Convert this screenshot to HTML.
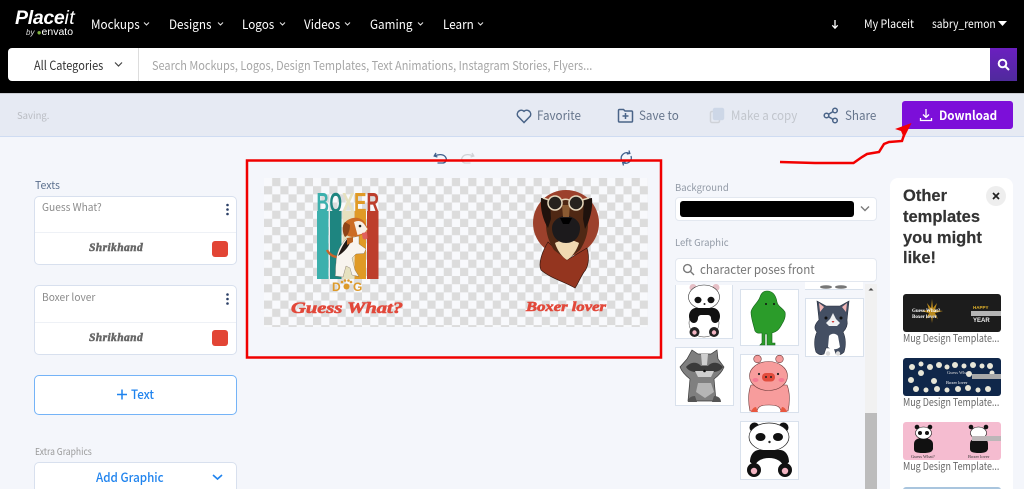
<!DOCTYPE html>
<html style="height:489px;overflow:hidden"><head><meta charset="utf-8">
<style>
html,body{margin:0;padding:0}
body{width:1024px;height:489px;overflow:hidden;position:relative;background:#f4f6fb;font-family:"Noto Sans CJK JP","Liberation Sans",sans-serif}
#w{position:absolute;left:0;top:0;width:1024px;height:489px;overflow:hidden}
.t{position:absolute;white-space:nowrap;line-height:16px;height:16px;transform-origin:0 50%}
.b{position:absolute;box-sizing:border-box}
.n{color:#fff;font-size:13px;transform:scaleX(.9)}
.a{font-size:12.5px;transform:scaleX(.93)}
.card{background:#fff;border:1px solid #d8e0ee;border-radius:5px}
.sh{font-family:"Liberation Serif",serif;font-weight:bold;font-style:italic;color:#666;font-size:11.5px;-webkit-text-stroke:.5px #666;letter-spacing:.4px}
.sw{position:absolute;width:16px;height:16px;background:#e24535;border-radius:3px}
.th{position:absolute;background:#fff;border:1px solid #d9e1ec;box-sizing:border-box}
.cap{color:#666;font-size:10.5px;transform:scaleX(.85)}
.h{position:absolute;white-space:nowrap;left:903px;height:21px;line-height:21px;font-family:'Liberation Sans',sans-serif;font-weight:bold;font-size:16.5px;color:#333;-webkit-text-stroke:.2px #333}
svg{position:absolute;overflow:visible}
</style></head><body><div id="w">
<div class="b" style="left:0;top:0;width:1024px;height:93px;background:#000"></div>
<div class="t" style="left:15px;top:6px;height:24px;line-height:24px;font-family:'Liberation Sans',sans-serif;font-style:italic;font-weight:bold;font-size:19.5px;color:#fff;letter-spacing:-.3px">Place<span style="font-weight:normal;letter-spacing:.5px">it</span></div>
<div class="t" style="left:26px;top:24px;font-family:'Liberation Sans',sans-serif;font-size:8px;color:#ddd"><i>by</i> <span style="color:#82b541">●</span><span style="color:#fff;font-size:10.5px">envato</span></div>

<div class="t n" style="left:91px;top:16px">Mockups</div>
<div class="t n" style="left:169px;top:16px">Designs</div>
<div class="t n" style="left:242px;top:16px">Logos</div>
<div class="t n" style="left:304px;top:16px">Videos</div>
<div class="t n" style="left:370px;top:16px">Gaming</div>
<div class="t n" style="left:443px;top:16px">Learn</div>
<svg style="left:0;top:0" width="1024" height="93" fill="none" stroke="#ddd" stroke-width="1.1">
<path d="M144 22.5l2.5 2.500 2.500-2.500M218 22.500l2.500 2.500 2.500-2.500M280 22.500l2.500 2.500 2.500-2.500M345 22.500l2.500 2.500 2.500-2.500M418 22.500l2.500 2.500 2.500-2.500M478 22.500l2.500 2.500 2.500-2.500"/>
<path d="M835 20v8M832.3 25.3l2.7 2.9 2.7-2.9" stroke="#fff" stroke-width="1.3"/>
<path d="M998 21h9l-4.500 5z" fill="#fff" stroke="none"/>
</svg>
<div class="t n" style="left:864px;top:16px;font-size:11.5px;transform:scaleX(.92)">My Placeit</div>
<div class="t n" style="left:932px;top:16px;font-size:11.5px;transform:scaleX(.89)">sabry_remon</div>

<div class="b" style="left:8px;top:48px;width:1009px;height:33px;background:#fff;border-radius:4px 0 0 4px"></div>
<div class="b" style="left:138px;top:48px;width:1px;height:33px;background:#ddd"></div>
<div class="t" style="left:34px;top:56.5px;font-size:12.5px;color:#333;transform:scaleX(.875)">All Categories</div>
<svg style="left:0;top:0" width="140" height="80" fill="none" stroke="#444" stroke-width="1.2"><path d="M115 62.5l3.500 3.500 3.500-3.500"/></svg>
<div class="t" style="left:152px;top:56.5px;font-size:12.3px;color:#a6a6a6;transform:scaleX(.89)">Search Mockups, Logos, Design Templates, Text Animations, Instagram Stories, Flyers...</div>
<div class="b" style="left:990px;top:48px;width:27px;height:33px;background:linear-gradient(#6b1fc0,#4f2a9c)"></div>
<svg style="left:990px;top:48px" width="27" height="33" fill="none" stroke="#fff" stroke-width="2"><circle cx="12.5" cy="15.5" r="3.8"/><path d="M15.5 18.5l3.500 3.500"/></svg>

<div class="b" style="left:0;top:93px;width:1024px;height:44px;background:#e6eaf3;border-top:1px solid #c9ccd2;border-bottom:1px solid #cfdcf2"></div>
<div class="t" style="left:17px;top:107px;font-size:9.5px;color:#b9bcc2">Saving.</div>
<div class="t a" style="left:537px;top:107px;color:#66758c">Favorite</div>
<div class="t a" style="left:639px;top:107px;color:#66758c">Save to</div>
<div class="t a" style="left:731px;top:107px;color:#c2c6cd">Make a copy</div>
<div class="t a" style="left:845px;top:107px;color:#66758c">Share</div>
<svg style="left:0;top:0" width="1024" height="180" fill="none" stroke="#4a6488" stroke-width="1.5">
<path d="M524 122.5l-6.200-6.300a4 4 0 0 1 6.200-4.900a4 4 0 0 1 6.200 4.900z"/>
<path d="M618.500 110.500a1 1 0 0 1 1-1h4l1.500 1.500h6.500a1 1 0 0 1 1 1v9a1 1 0 0 1-1 1h-12a1 1 0 0 1-1-1zM625.500 113v6M622.500 116h6"/>
<rect x="710.500" y="111.500" width="9" height="11" rx="1.5" stroke="#cfd2d8"/>
<rect x="713.500" y="108.500" width="10" height="11" rx="1.5" fill="#cdd7e7" stroke="#cdd7e7"/>
<circle cx="826.500" cy="115.500" r="2.3"/><circle cx="835" cy="110.500" r="2.3"/><circle cx="835" cy="120.500" r="2.3"/><path d="M828.500 114.300l4.500-2.700M828.500 116.700l4.500 2.700"/>
</svg>
<div class="b" style="left:902px;top:101px;width:111px;height:28px;background:#7c0fd9;border-radius:3px"></div>
<div class="t a" style="left:939px;top:107px;font-weight:bold;color:#fff">Download</div>
<svg style="left:0;top:0" width="1024" height="180" fill="none" stroke="#fff" stroke-width="1.3"><path d="M926 109v8M923 114.500l3 3 3-3M920.500 118v2.500h11V118"/></svg>

<svg style="left:0;top:0" width="1024" height="180" fill="none" stroke="#3f5f8c" stroke-width="1.3">
<path d="M436 153l-1.800 3 3.200 1M434.500 156c4-2 9-2 11 1s0 6-3 6h-5"/>
<path d="M472 153l1.800 3-3.200 1M473.500 156c-4-2-9-2-11 1s0 6 3 6h5" stroke="#d0d2d6"/>
<path d="M621.500 160a5.500 5.500 0 0 1 8-6.500M631 156a5.500 5.500 0 0 1-8 6.500M629 150.500l.8 3-3 .5M623.500 165.500l-.8-3 3-.5"/>
</svg>

<!-- red annotation arrow -->
<svg style="left:0;top:0" width="1024" height="180"><path d="M780 162L815 163L853.500 163L862 157L867 154L879 152L884 144L889 142L902 141L905 132" fill="none" stroke="#f20000" stroke-width="2.5"/><path d="M911.500 123L895 129L901 131L904 138z" fill="#f20000"/></svg>

<!-- left panel -->
<div class="t" style="left:35px;top:178px;font-size:10.5px;color:#5b6f8d">Texts</div>
<div class="b card" style="left:34px;top:196px;width:203px;height:69px"></div>
<div class="b" style="left:35px;top:232px;width:201px;height:1px;background:#eef1f6"></div>
<div class="t" style="left:42px;top:200px;font-size:10.5px;color:#8b8b8b;transform:scaleX(.97)">Guess What?</div>
<div class="t sh" style="left:89px;top:240px">Shrikhand</div>
<div class="sw" style="left:212px;top:241px"></div>
<div class="b card" style="left:34px;top:285px;width:203px;height:70px"></div>
<div class="b" style="left:35px;top:322px;width:201px;height:1px;background:#eef1f6"></div>
<div class="t" style="left:42px;top:290px;font-size:10.5px;color:#8b8b8b;transform:scaleX(.97)">Boxer lover</div>
<div class="t sh" style="left:89px;top:330px">Shrikhand</div>
<div class="sw" style="left:212px;top:330px"></div>
<svg style="left:0;top:0" width="240" height="360" fill="#2b3f66"><circle cx="227.5" cy="205" r="1.3"/><circle cx="227.5" cy="209.5" r="1.3"/><circle cx="227.5" cy="214" r="1.3"/><circle cx="227.5" cy="294.5" r="1.3"/><circle cx="227.5" cy="299" r="1.3"/><circle cx="227.5" cy="303.5" r="1.3"/></svg>
<div class="b" style="left:34px;top:375px;width:203px;height:40px;background:#fff;border:1px solid #74b3f7;border-radius:5px"></div>
<div class="t a" style="left:131px;top:386px;font-weight:500;color:#1f83ee">Text</div>
<svg style="left:0;top:0" width="240" height="420" fill="none" stroke="#1f83ee" stroke-width="1.5"><path d="M122 389.500v10M117 394.500h10"/></svg>
<div class="t" style="left:35px;top:443px;font-size:9.5px;color:#999;transform:scaleX(.9)">Extra Graphics</div>
<div class="b card" style="left:34px;top:462px;width:203px;height:40px"></div>
<div class="t a" style="left:96px;top:469px;font-weight:500;color:#1f83ee">Add Graphic</div>
<svg style="left:0;top:0" width="240" height="489" fill="none" stroke="#1f83ee" stroke-width="1.6"><path d="M213 475l4.500 4 4.500-4"/></svg>

<!-- canvas -->
<svg style="left:0;top:0" width="1024" height="489">
<defs><pattern id="c" x="264" y="178" width="16.34" height="16.34" patternUnits="userSpaceOnUse"><rect x="8.17" width="8.17" height="8.17" fill="#dcdcdc"/><rect y="8.17" width="8.17" height="8.17" fill="#dcdcdc"/></pattern></defs>
<rect x="264" y="178" width="384" height="149" fill="#f8f9fc"/>
<rect x="264" y="178" width="384" height="149" fill="url(#c)"/>
<rect x="247" y="160.5" width="414" height="197" fill="none" stroke="#f00000" stroke-width="2.5"/>
<!-- boxer stripes -->
<rect x="317" y="211" width="11.5" height="68" fill="#3cb0ad"/>
<rect x="330" y="211" width="11.5" height="68" fill="#1e8580"/>
<rect x="342.5" y="211" width="11.5" height="68" fill="#e6e1bf"/>
<rect x="354.5" y="211" width="11.5" height="68" fill="#e09a26"/>
<rect x="367" y="211" width="11.5" height="68" fill="#bd3e2c"/>
<g font-family="'Liberation Sans',sans-serif" font-weight="bold" font-size="28">
<text x="316.5" y="212" fill="#3cb0ad" textLength="12.5" lengthAdjust="spacingAndGlyphs">B</text>
<text x="329.5" y="212" fill="#1e8580" textLength="12.5" lengthAdjust="spacingAndGlyphs">O</text>
<text x="342" y="212" fill="#e6e1bf" textLength="12.5" lengthAdjust="spacingAndGlyphs">X</text>
<text x="354" y="212" fill="#e09a26" textLength="12.5" lengthAdjust="spacingAndGlyphs">E</text>
<text x="366.500" y="212" fill="#bd3e2c" textLength="12.5" lengthAdjust="spacingAndGlyphs">R</text>
</g>
<!-- beagle -->
<path d="M327 250c2 4 6 7 11 7" fill="none" stroke="#c8642a" stroke-width="2.4"/>
<path d="M346 239C340 245 336 254 336 263C335 268 336 274 335 276L343 277L346 266L350 268L352 275L359 276.500L355 270L352 258L356 254L364 253.500L366 249L359 244L359 236Z" fill="#f8f4ee" stroke="#5a4a3a" stroke-width=".3"/>
<path d="M338 256C341 248 344 243 348 238L351 241C348 248 344 252 338 256Z" fill="#221a16"/>
<path d="M347 238l6-1 0 5-6 3z" fill="#b8601f"/>
<path d="M343 226c2-6 9-9 15-8 5 1 7 4 8 7l2 4-2 4-7 3-7 1c-6-1-10-4-9-11z" fill="#cc6c24"/>
<path d="M354 222c4-2 8-1 10 2l3.500 5-3 4-7 2z" fill="#f7efe6"/>
<path d="M345 222c-3 3-3 11 0 15 3-1 5-7 5-12z" fill="#8e4517"/>
<circle cx="360" cy="226" r="1.300" fill="#222"/>
<path d="M362 233l5-1 .5 6c-1 2-4 2-5 0z" fill="#e0605c"/>
<text x="332" y="291" font-family="'Liberation Sans',sans-serif" font-weight="bold" font-size="12" fill="#dd9a2a">D</text>
<circle cx="346.5" cy="286.500" r="3" fill="#dd9a2a"/><circle cx="342" cy="282" r="1.3" fill="#dd9a2a"/><circle cx="345" cy="280.500" r="1.3" fill="#dd9a2a"/><circle cx="348.5" cy="280.5" r="1.3" fill="#dd9a2a"/><circle cx="351" cy="282" r="1.3" fill="#dd9a2a"/>
<text x="353" y="291" font-family="'Liberation Sans',sans-serif" font-weight="bold" font-size="12" fill="#dd9a2a">G</text>
<!-- boxer dog -->
<circle cx="566" cy="223" r="33" fill="#9c412c"/>
<path d="M548 242L567 260L587 248C590 258 588 268 584 272C580 278 578 284 575 288C565 282 550 278 541 270C538 264 542 252 548 242Z" fill="#94351f" stroke="#35160e" stroke-width=".7"/>
<path d="M544 200h45c2 8 1 16-1 24c0 10-3 18-8 26l-13 10-13-10c-5-8-8-16-8-26c-2-8-2-16-2-24z" fill="#4f2814"/>
<path d="M541 198l9 1 1 20-3 9c-5-8-8-19-7-30zM592 198l-8 1-1 20 2 10c5-9 8-20 7-31z" fill="#1f120d"/>
<path d="M555 243c2 7 7 14 12 17 5-3 10-10 12-17-4-2-7-3-12-3s-8 1-12 3z" fill="#f0d9b2"/>
<path d="M552 228c0-7 7-12 14-12s14 5 14 12c0 9-6 15-14 15s-14-6-14-15z" fill="#1c1a1c"/>
<path d="M560 218h12l-3 6h-6z" fill="#000"/>
<path d="M562 205h8l-1 12h-6z" fill="#8a5a32"/>
<circle cx="555" cy="203" r="7" fill="#26221e" stroke="#e6d8bd" stroke-width="1.5"/>
<circle cx="576" cy="203" r="7" fill="#26221e" stroke="#e6d8bd" stroke-width="1.5"/>
<path d="M543 198l6 2M582 200l7-2M562 200c3-1 5-1 7 0" stroke="#e6d8bd" stroke-width="1.5" fill="none"/>
<!-- captions -->
<g font-family="'Liberation Serif',serif" font-weight="bold" font-style="italic" fill="#e2483a" stroke="#e2483a" stroke-width=".6">
<text x="291" y="313" font-size="16" textLength="112" lengthAdjust="spacingAndGlyphs">Guess What?</text>
<text x="526" y="311" font-size="13.5" textLength="80" lengthAdjust="spacingAndGlyphs">Boxer lover</text>
</g>
</svg>

<!-- right controls -->
<div class="t" style="left:675px;top:179px;font-size:9.5px;color:#929aa6">Background</div>
<div class="b card" style="left:675px;top:197px;width:202px;height:24px;border-radius:4px;border-color:#e3e8f0"></div>
<div class="b" style="left:680px;top:201px;width:174px;height:16px;background:#000;border-radius:3px"></div>
<div class="t" style="left:675px;top:234px;font-size:9.5px;color:#929aa6">Left Graphic</div>
<div class="b card" style="left:675px;top:258px;width:202px;height:24px;border-radius:4px;border-color:#e3e8f0"></div>
<div class="t a" style="left:700px;top:261px;color:#777">character poses front</div>
<svg style="left:0;top:0" width="1024" height="300" fill="none" stroke="#7a7a7a" stroke-width="1.4"><path d="M861 206.500l4 4 4-4"/><circle cx="687.5" cy="268.500" r="3.9"/><path d="M690.500 271.500l3.500 3.500"/></svg>

<!-- thumbnails -->
<div class="b" style="left:805px;top:282px;width:58px;height:8px;background:#fff;border-bottom:1px solid #d9e1ec"></div>
<div class="th" style="left:675px;top:285px;width:58px;height:54px;border-top:0"></div>
<div class="th" style="left:740px;top:289px;width:59px;height:57px"></div>
<div class="th" style="left:805px;top:298px;width:59px;height:59px"></div>
<div class="th" style="left:675px;top:347px;width:59px;height:59px"></div>
<div class="th" style="left:740px;top:354px;width:59px;height:59px"></div>
<div class="th" style="left:740px;top:421px;width:59px;height:59px"></div>
<div class="b" style="left:865px;top:284px;width:12px;height:205px;background:#f1f1f1"></div>
<div class="b" style="left:865px;top:413px;width:12px;height:76px;background:#bcbcbc"></div>
<svg style="left:0;top:0" width="1024" height="489">
<path d="M868.500 290.500l2.500-2.500 2.500 2.500z" fill="#444"/>
<ellipse cx="826" cy="287" rx="6" ry="1.800" fill="#777"/><ellipse cx="841" cy="287" rx="6" ry="1.800" fill="#777"/>
<!-- panda 1 -->
<circle cx="693" cy="287.500" r="3.500" fill="#e6bfc6"/><circle cx="716" cy="287.500" r="3.500" fill="#e6bfc6"/>
<ellipse cx="704" cy="297" rx="15.500" ry="12" fill="#fff" stroke="#333" stroke-width=".6"/>
<ellipse cx="704" cy="323" rx="15" ry="14" fill="#fff" stroke="#333" stroke-width=".5"/>
<ellipse cx="698" cy="300" rx="3.500" ry="3.200" fill="#111"/><ellipse cx="711" cy="300" rx="3.500" ry="3.200" fill="#111"/>
<circle cx="704.500" cy="304" r="1" fill="#222"/>
<path d="M689 316c0-5 4-9 9-8h13c5-1 9 3 9 8 0 4-2 7-5 7-2 0-4-2-4-5 0-2-2-3-3-3h-7c-1 0-3 1-3 3 0 3-2 5-4 5-3 0-5-3-5-7z" fill="#111"/>
<ellipse cx="694.500" cy="332" rx="5" ry="5" fill="#222"/><ellipse cx="714" cy="332" rx="5" ry="5" fill="#222"/>
<circle cx="694.500" cy="332.500" r="2.200" fill="#f3b5c3"/><circle cx="714" cy="332.500" r="2.200" fill="#f3b5c3"/>
<!-- green -->
<path d="M767 291c6 0 9 5 10 11 1 5 5 5 8 10 1 5-1 9-3 12-3 6-6 8-10 9l0 10h3v2h-8l0-11h-2l0 11h-5l2-2 0-10c-3 0-5 1-7-2-2-8-4-13-4-19 1-6 7-9 9-15 1-3 3-6 7-6z" fill="#2b9c2a" stroke="#15621a" stroke-width=".6"/>
<circle cx="766" cy="304" r="1" fill="#111"/><circle cx="774" cy="304" r="1" fill="#111"/>
<!-- cat -->
<path d="M819 320l-2-19 9 5h14l9-5-2 19c1 5-1 9-4 12 3 6 3 14 1 20-3 3-6 3-8 2l-2-6h-8l-2 6c-2 1-5 1-8-2-2-6-2-14 1-20-3-3-3-7 2-12z" fill="#444f63" stroke="#2a3140" stroke-width=".6"/>
<path d="M819 303l5 4-4 5zM847 303l-5 4 4 5z" fill="#f0b5b5"/>
<path d="M829 336c2-3 7-3 9 0l2 11c-3 3-9 3-12 0z" fill="#fff"/>
<path d="M833 313l3 6 4 4-3 3h-8l-3-3 4-4z" fill="#eef0f2"/>
<circle cx="826" cy="318" r="1.500" fill="#111"/><circle cx="841" cy="318" r="1.500" fill="#111"/><path d="M831.500 321h3l-1.500 2z" fill="#c33"/>
<circle cx="828" cy="353.500" r="2.200" fill="#ddd"/><circle cx="838" cy="353.500" r="2.200" fill="#ddd"/>
<!-- raccoon -->
<path d="M692 350l6 4h13l6-4 1 9 6 8c-2 5-6 9-10 12l2 22h-28l2-22c-4-3-8-7-10-12l7-8z" fill="#7f7f7f" stroke="#3a3a3a" stroke-width=".7"/>
<path d="M701 354h7l-1 11h-5z" fill="#cfcfcf"/>
<path d="M686 367c5-6 12-5 15-1h7c3-4 10-5 15 1-3 5-10 6-14 4-2 3-7 3-9 0-4 2-11 1-14-4z" fill="#3a3a3a"/>
<path d="M695 371h19l-3 6h-13z" fill="#cfcfcf"/>
<path d="M698 383h13l3 9-9 6-9-6z" fill="#b5b5b5"/>
<circle cx="704.500" cy="371" r="1.300" fill="#111"/>
<path d="M688 402c0-4 3-6 7-6l2 6zM721 402c0-4-3-6-7-6l-2 6z" fill="#555"/>
<!-- pig -->
<circle cx="757.500" cy="359" r="3.800" fill="#f49b9b" stroke="#6d3a3a" stroke-width=".6"/><circle cx="779.500" cy="359" r="3.800" fill="#f49b9b" stroke="#6d3a3a" stroke-width=".6"/>
<path d="M751 385c-3 7-3 17-1 26h7c1-4 3-6 12-6s11 2 12 6h7c2-9 2-19-1-26z" fill="#f79c9c" stroke="#6d3a3a" stroke-width=".6"/>
<ellipse cx="768.500" cy="376" rx="19" ry="14.500" fill="#f79c9c" stroke="#6d3a3a" stroke-width=".6"/>
<path d="M751 412c1-3 3-5 5-5l2 5zM787 412c-1-3-3-5-5-5l-2 5z" fill="#e8573f"/>
<rect x="762" y="373" width="13" height="8.500" rx="4" fill="#e24c3c"/><circle cx="766" cy="377" r="1" fill="#222"/><circle cx="771" cy="377" r="1" fill="#222"/>
<circle cx="759" cy="374" r="1.100" fill="#222"/><circle cx="778" cy="374" r="1.100" fill="#222"/>
<ellipse cx="755.500" cy="380" rx="3" ry="2" fill="#f57a93"/><ellipse cx="781.500" cy="380" rx="3" ry="2" fill="#f57a93"/>
<!-- panda 2 -->
<circle cx="754.500" cy="427.500" r="5" fill="#111"/><circle cx="783.500" cy="427.500" r="5" fill="#111"/>
<ellipse cx="769" cy="437" rx="20" ry="14" fill="#fff" stroke="#222" stroke-width=".7"/>
<ellipse cx="760.500" cy="437" rx="5" ry="4" fill="#111"/><ellipse cx="778" cy="437" rx="5" ry="4" fill="#111"/>
<circle cx="769.500" cy="442" r="1.200" fill="#222"/>
<path d="M750 462c0-7 4-12 9-12h21c5 0 9 5 9 12l-4 4c-4-3-7-4-9-4h-13c-2 0-5 1-8 4z" fill="#111"/>
<ellipse cx="769" cy="467" rx="14" ry="9" fill="#fff"/>
<ellipse cx="754" cy="470" rx="7" ry="7" fill="#111"/><ellipse cx="785" cy="470" rx="7" ry="7" fill="#111"/>
<circle cx="754" cy="471" r="3.200" fill="#f3b5c3"/><circle cx="785" cy="471" r="3.200" fill="#f3b5c3"/>
</svg>

<!-- right panel -->
<div class="b" style="left:890px;top:178px;width:123px;height:320px;background:#fff;border-radius:8px"></div>
<div class="h" style="top:186px">Other</div>
<div class="h" style="top:207px">templates</div>
<div class="h" style="top:228px">you might</div>
<div class="h" style="top:248px">like!</div>
<div class="b" style="left:986px;top:186px;width:20px;height:20px;border-radius:50%;background:#eee"></div>
<svg style="left:986px;top:186px" width="20" height="20" stroke="#222" stroke-width="1.7"><path d="M7 7l6 6M13 7l-6 6"/></svg>

<svg style="left:0;top:0" width="1024" height="489">
<rect x="903" y="294" width="98" height="38" rx="3" fill="#1c1c1c"/>
<path d="M932 299l1 9 4-5-2 7 8 1-8 2 3 6-5-4-1 8-1-8-5 4 3-6-8-2 8-1-2-7 4 5z" fill="#b9891c"/>
<text x="912" y="312" font-family="'Liberation Serif',serif" font-size="5" font-weight="bold" fill="#fff">Guess What?</text>
<text x="912" y="318" font-family="'Liberation Serif',serif" font-size="5" font-weight="bold" fill="#fff">Boxer lover</text>
<text x="973" y="309" font-family="'Liberation Sans',sans-serif" font-size="4.5" font-weight="bold" fill="#e0b12a">HAPPY</text>
<text x="973" y="322" font-family="'Liberation Sans',sans-serif" font-size="6" font-weight="bold" fill="#eee">YEAR</text>
<rect x="971" y="311" width="30" height="5" fill="#b5b5b5"/>
<rect x="903" y="358" width="98" height="38" rx="3" fill="#10274a"/>
<g fill="#e8e6d8"><circle cx="912" cy="367" r="3"/><circle cx="921" cy="364" r="2.5"/><circle cx="930" cy="367" r="3"/><circle cx="939" cy="365" r="3"/><circle cx="947" cy="367" r="2.5"/><circle cx="955" cy="365" r="3"/><circle cx="964" cy="366" r="2.5"/><circle cx="973" cy="365" r="3"/><circle cx="982" cy="366" r="2.5"/><circle cx="990" cy="366" r="3"/><circle cx="911" cy="380" r="3"/><circle cx="921" cy="373" r="3"/><circle cx="934" cy="381" r="3"/><circle cx="969" cy="374" r="3"/><circle cx="992" cy="373" r="2.5"/><circle cx="916" cy="389" r="3"/><circle cx="926" cy="390" r="2.5"/><circle cx="937" cy="389" r="3"/><circle cx="947" cy="390" r="2.5"/><circle cx="958" cy="389" r="3"/><circle cx="968" cy="388" r="3"/><circle cx="978" cy="390" r="2.5"/><circle cx="988" cy="389" r="3"/></g>
<text x="947" y="374" font-family="'Liberation Serif',serif" font-size="4.5" fill="#ddd">Guess What?</text>
<text x="946" y="384" font-family="'Liberation Serif',serif" font-size="4.5" fill="#fff">Boxer lover</text>
<rect x="972" y="374" width="29" height="5" fill="#a8a8a8"/>
<rect x="903" y="422" width="98" height="38" rx="3" fill="#f5bcd0"/>
<g fill="#111"><circle cx="917" cy="427" r="2.3"/><circle cx="930" cy="427" r="2.3"/><circle cx="971" cy="427" r="2.3"/><circle cx="986" cy="427" r="2.3"/><path d="M914 444c0-4 3-6 9-6s10 2 10 6v5c-1 3-3 4-10 4s-9-1-9-4z"/><path d="M970 444c0-4 3-6 9-6s9 2 9 6v5c-1 3-3 4-9 4s-9-1-9-4z"/></g>
<ellipse cx="923.5" cy="433" rx="8" ry="6" fill="#fff" stroke="#111" stroke-width=".6"/><ellipse cx="978.5" cy="433" rx="8" ry="6" fill="#fff" stroke="#111" stroke-width=".6"/>
<circle cx="920" cy="433" r="2" fill="#111"/><circle cx="927" cy="433" r="2" fill="#111"/>
<rect x="972" y="436" width="29" height="5" fill="#bcb6b8"/>
<text x="911" y="458" font-family="'Liberation Serif',serif" font-size="4.5" fill="#333">Guess What?</text>
<text x="968" y="458" font-family="'Liberation Serif',serif" font-size="4.5" fill="#333">Boxer lover</text>
<rect x="903" y="487" width="98" height="10" rx="3" fill="#a9c5de"/>
</svg>
<div class="t cap" style="left:903px;top:331px">Mug Design Template...</div>
<div class="t cap" style="left:903px;top:395px">Mug Design Template...</div>
<div class="t cap" style="left:903px;top:459px">Mug Design Template...</div>
</div></body></html>
